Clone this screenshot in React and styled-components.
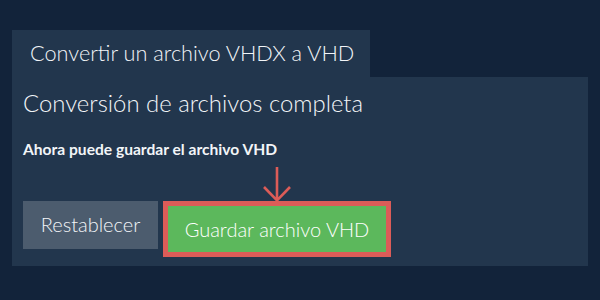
import React from "react";
import styled, { createGlobalStyle } from "styled-components";

const Global = createGlobalStyle`
  html, body {
    margin: 0;
    padding: 0;
    background: #12233a;
  }
  body {
    font-family: Lato, "Noto Sans", sans-serif;
    color: #f2f5f8;
  }
`;

const Page = styled.div`
  width: 600px;
  height: 300px;
  box-sizing: border-box;
  padding: 30px 12px 0 12px;
`;

const Tab = styled.div`
  display: inline-block;
  width: 358px;
  height: 47px;
  box-sizing: border-box;
  padding: 9px 0 0 18px;
  background: #22364d;
  font-size: 21.7px;
  font-weight: 300;
  line-height: 28px;
`;

const Panel = styled.div`
  background: #22364d;
  height: 189px;
  box-sizing: border-box;
  padding: 11px 11px 0 11px;
`;

const Heading = styled.h2`
  margin: 0;
  font-size: 23.9px;
  font-weight: 300;
  line-height: 30px;
`;

const Message = styled.p`
  margin: 21px 0 0 0;
  font-size: 15.6px;
  font-weight: 700;
  line-height: 20px;
`;

const Actions = styled.div`
  display: flex;
  align-items: flex-start;
  gap: 5px;
  margin-top: 42px;
`;

const ResetButton = styled.button`
  width: 135px;
  height: 48px;
  border: none;
  background: #4c5c6e;
  color: #f2f5f8;
  font-family: inherit;
  font-size: 20px;
  font-weight: 300;
  padding: 0 0 2px 0;
`;

const Highlight = styled.div`
  position: relative;
  border: 5px solid #dc5c58;
  background: #dc5c58;
`;

const SaveButton = styled.button`
  display: block;
  width: 218px;
  height: 46px;
  border: none;
  background: #5cb85c;
  color: #ffffff;
  font-family: inherit;
  font-size: 20px;
  font-weight: 300;
  padding: 0;
`;

const Arrow = styled.svg`
  position: absolute;
  left: 50%;
  bottom: 100%;
  margin-left: -16px;
  margin-bottom: 3px;
`;

export default function App() {
  return (
    <>
      <Global />
      <Page>
        <Tab>Convertir un archivo VHDX a VHD</Tab>
        <Panel>
          <Heading>Conversión de archivos completa</Heading>
          <Message>Ahora puede guardar el archivo VHD</Message>
          <Actions>
            <ResetButton>Restablecer</ResetButton>
            <Highlight>
              <Arrow width="32" height="37" viewBox="0 0 32 37">
                <path
                  d="M16 1 V35 M3 21 L16 34.5 L29 21"
                  fill="none"
                  stroke="#dc5c58"
                  strokeWidth="2.6"
                />
              </Arrow>
              <SaveButton>Guardar archivo VHD</SaveButton>
            </Highlight>
          </Actions>
        </Panel>
      </Page>
    </>
  );
}
